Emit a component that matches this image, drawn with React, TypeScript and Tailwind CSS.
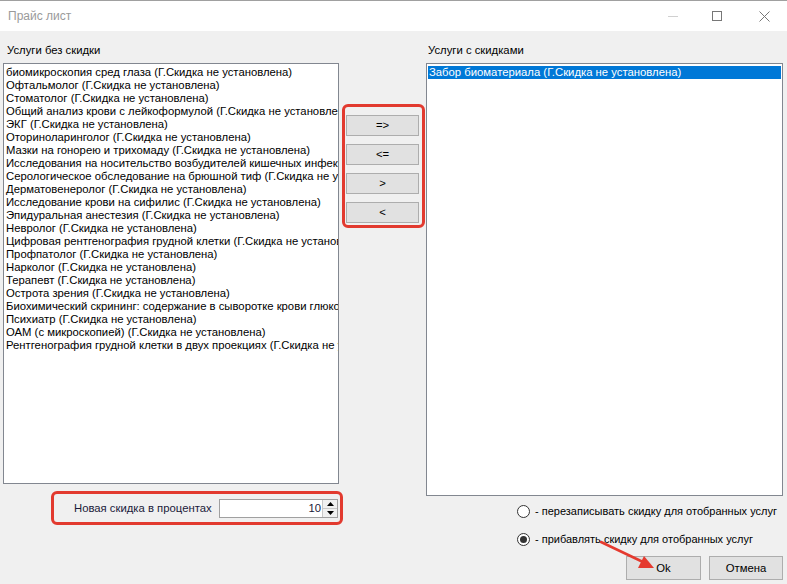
import React from "react";

const leftItems = [
  "биомикроскопия сред глаза (Г.Скидка не установлена)",
  "Офтальмолог (Г.Скидка не установлена)",
  "Стоматолог (Г.Скидка не установлена)",
  "Общий анализ крови с лейкоформулой (Г.Скидка не установлена)",
  "ЭКГ (Г.Скидка не установлена)",
  "Оториноларинголог (Г.Скидка не установлена)",
  "Мазки на гонорею и трихомаду (Г.Скидка не установлена)",
  "Исследования на носительство возбудителей кишечных инфекций (Г.Скидка не установлена)",
  "Серологическое обследование на брюшной тиф (Г.Скидка не установлена)",
  "Дерматовенеролог (Г.Скидка не установлена)",
  "Исследование крови на сифилис (Г.Скидка не установлена)",
  "Эпидуральная анестезия (Г.Скидка не установлена)",
  "Невролог (Г.Скидка не установлена)",
  "Цифровая рентгенография грудной клетки (Г.Скидка не установлена)",
  "Профпатолог (Г.Скидка не установлена)",
  "Нарколог (Г.Скидка не установлена)",
  "Терапевт (Г.Скидка не установлена)",
  "Острота зрения (Г.Скидка не установлена)",
  "Биохимический скрининг: содержание в сыворотке крови глюкозы (Г.Скидка не установлена)",
  "Психиатр (Г.Скидка не установлена)",
  "ОАМ (с микроскопией) (Г.Скидка не установлена)",
  "Рентгенография грудной клетки в двух проекциях (Г.Скидка не установлена)",
];

const moveButtons = ["=>", "<=", ">", "<"];

function Radio({ checked, label }: { checked?: boolean; label: string }) {
  return (
    <div className="flex items-center h-[28px] whitespace-nowrap text-[11px]">
      <span className="w-[13px] h-[13px] shrink-0 rounded-full border border-[#333] bg-white flex items-center justify-center">
        {checked && <span className="w-[7px] h-[7px] rounded-full bg-[#333]" />}
      </span>
      <span className="ml-[5px]">{label}</span>
    </div>
  );
}

export default function App() {
  return (
    <div
      className="relative w-[787px] h-[584px] bg-[#f0f0f0] text-[11.3px] leading-[13px] text-black overflow-hidden flex flex-col"
      style={{ fontFamily: '"Liberation Sans", Arial, sans-serif' }}
    >
      {/* title bar */}
      <div className="h-[31px] bg-white border-t border-[#a0a0a0] flex items-center shrink-0">
        <span className="ml-[8px] text-[12px] text-[#9a9a9a]">Прайс лист</span>
        <div className="ml-auto flex items-center h-full">
          <span className="w-[10px] h-px bg-[#d0d0d0] mr-[34px]" />
          <span className="w-[10px] h-[10px] border border-[#777] mr-[37px]" />
          <svg width="11" height="11" viewBox="0 0 11 11" className="mr-[17px]">
            <path d="M0.5 0.5 L10.5 10.5 M10.5 0.5 L0.5 10.5" stroke="#777" strokeWidth="1" />
          </svg>
        </div>
      </div>

      <div className="flex flex-1">
        {/* left column */}
        <div className="w-[339px] shrink-0 flex flex-col">
          <div className="h-[32px] flex items-end pb-[6px] pl-[7px]">Услуги без скидки</div>
          <div className="ml-[3px] h-[421px] bg-white border border-[#828790] pt-[2px] pl-[2px] overflow-hidden">
            {leftItems.map((t) => (
              <div key={t} className="h-[13px] whitespace-nowrap">{t}</div>
            ))}
          </div>
          <div className="ml-[51px] mt-[7px] w-[292px] h-[34px] border-[3px] border-[#e23a2f] rounded-[6px] flex items-center pl-[20px] pr-[2px] whitespace-nowrap">
            <span className="text-[#1a1a3a]">Новая скидка в процентах</span>
            <div className="ml-auto w-[119px] h-[19px] bg-white border border-[#a0a0a0] flex items-stretch">
              <span className="flex-1 text-right pr-[1px] leading-[17px] text-[#1a1a3a]">10</span>
              <div className="w-[15px] flex flex-col border-l border-[#c8c8c8]">
                <div className="flex-1 bg-[#f0f0f0] flex items-center justify-center border-b border-[#c8c8c8]">
                  <svg width="7" height="4" viewBox="0 0 7 4"><path d="M3.5 0 L7 4 L0 4 Z" fill="#000" /></svg>
                </div>
                <div className="flex-1 bg-[#f0f0f0] flex items-center justify-center">
                  <svg width="7" height="4" viewBox="0 0 7 4"><path d="M0 0 L7 0 L3.5 4 Z" fill="#000" /></svg>
                </div>
              </div>
            </div>
          </div>
        </div>

        {/* middle column */}
        <div className="w-[87px] shrink-0 pt-[73px]">
          <div className="ml-[3px] w-[83px] border-[3px] border-[#e23a2f] rounded-[6px] pt-[8px] pb-[2px] pl-[1px] flex flex-col gap-[8px]">
            {moveButtons.map((b) => (
              <div
                key={b}
                className="w-[73px] h-[21px] bg-[#e1e1e1] border border-[#adadad] flex items-center justify-center leading-none"
              >
                {b}
              </div>
            ))}
          </div>
        </div>

        {/* right column */}
        <div className="w-[357px] shrink-0 flex flex-col">
          <div className="h-[32px] flex items-end pb-[6px] pl-[2px]">Услуги с скидками</div>
          <div className="h-[433px] bg-white border border-[#828790] pt-[2px] px-[1px]">
            <div className="h-[13px] bg-[#0078d7] text-white pl-[1px] whitespace-nowrap">
              Забор биоматериала (Г.Скидка не установлена)
            </div>
          </div>
          <div className="ml-[91px] mt-[1px]">
            <Radio label="- перезаписывать скидку для отобранных услуг" />
            <Radio checked label="- прибавлять скидку для отобранных услуг" />
          </div>
          <div className="flex justify-end gap-[8px] mt-[3px]">
            <div className="w-[75px] h-[24px] bg-[#e1e1e1] border border-[#adadad] flex items-center justify-center">Ok</div>
            <div className="w-[74px] h-[24px] bg-[#e1e1e1] border border-[#adadad] flex items-center justify-center">Отмена</div>
          </div>
        </div>
      </div>

      {/* annotation arrow */}
      <svg className="absolute left-0 top-0 pointer-events-none" width="787" height="584">
        <line x1="601" y1="542" x2="643" y2="562" stroke="#e53a2f" strokeWidth="2.5" strokeLinecap="round" />
        <path d="M654 568 L638 568 L644 556 Z" fill="#e53a2f" />
      </svg>
    </div>
  );
}
